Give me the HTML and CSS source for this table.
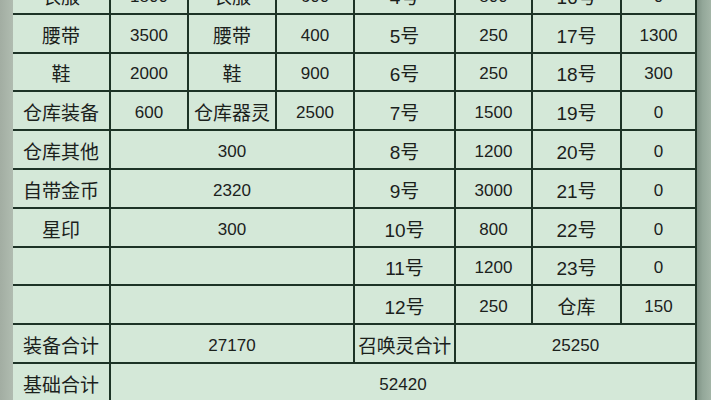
FILE: index.html
```html
<!DOCTYPE html>
<html lang="zh">
<head>
<meta charset="utf-8">
<link rel="stylesheet" href="styles.css">
</head>
<body>
<div class="screen">
  <div class="edge-left"></div>
  <div class="sheet">
    <div class="grid">
      <div class="c">衣服</div><div class="c n">1800</div><div class="c">衣服</div><div class="c n">600</div><div class="c">4号</div><div class="c n">800</div><div class="c">16号</div><div class="c n">0</div>

      <div class="c">腰带</div><div class="c n">3500</div><div class="c">腰带</div><div class="c n">400</div><div class="c">5号</div><div class="c n">250</div><div class="c">17号</div><div class="c n">1300</div>

      <div class="c">鞋</div><div class="c n">2000</div><div class="c">鞋</div><div class="c n">900</div><div class="c">6号</div><div class="c n">250</div><div class="c">18号</div><div class="c n">300</div>

      <div class="c">仓库装备</div><div class="c n">600</div><div class="c">仓库器灵</div><div class="c n">2500</div><div class="c">7号</div><div class="c n">1500</div><div class="c">19号</div><div class="c n">0</div>

      <div class="c">仓库其他</div><div class="c n span3">300</div><div class="c">8号</div><div class="c n">1200</div><div class="c">20号</div><div class="c n">0</div>

      <div class="c">自带金币</div><div class="c n span3">2320</div><div class="c">9号</div><div class="c n">3000</div><div class="c">21号</div><div class="c n">0</div>

      <div class="c">星印</div><div class="c n span3">300</div><div class="c">10号</div><div class="c n">800</div><div class="c">22号</div><div class="c n">0</div>

      <div class="c"></div><div class="c n span3"></div><div class="c">11号</div><div class="c n">1200</div><div class="c">23号</div><div class="c n">0</div>

      <div class="c"></div><div class="c n span3"></div><div class="c">12号</div><div class="c n">250</div><div class="c">仓库</div><div class="c n">150</div>

      <div class="c">装备合计</div><div class="c n span3">27170</div><div class="c tight">召唤灵合计</div><div class="c n span3">25250</div>

      <div class="c">基础合计</div><div class="c n span7">52420</div>
    </div>
  </div>
  <div class="edge-right"></div>
</div>
</body>
</html>
```

FILE: styles.css
```css
html, body {
  margin: 0;
  padding: 0;
  width: 711px;
  height: 400px;
  overflow: hidden;
  background: #d4e8d8;
}

.screen {
  display: flex;
  width: 711px;
  height: 400px;
  overflow: hidden;
}

.edge-left {
  width: 13px;
  flex: none;
  background: linear-gradient(to right, #a2ada2, #b0bcb0);
}

.edge-right {
  width: 14px;
  flex: none;
  background: linear-gradient(to right, #7f9285, #93a799 40%, #a3b5a7);
}

.sheet {
  width: 684px;
  flex: none;
  overflow: hidden;
}

.grid {
  display: grid;
  grid-template-columns: 96px 76px 86px 76px 99px 75px 87px 73px;
  grid-auto-rows: 36.8px;
  gap: 2px;
  margin-top: -24px;
  background: #1d3326;
  border-right: 2px solid #1d3326;
}

.c {
  background: #d4e8d8;
  display: flex;
  align-items: center;
  justify-content: center;
  padding-top: 2px;
  box-sizing: border-box;
  font-family: "Liberation Sans", "Noto Sans CJK SC", sans-serif;
  font-size: 19px;
  color: #1b211c;
  white-space: nowrap;
  overflow: hidden;
}

.n {
  font-size: 17px;
  padding-top: 5px;
}

.tight {
  letter-spacing: -0.5px;
}

.span3 {
  grid-column: span 3;
}

.span7 {
  grid-column: span 7;
}
```
